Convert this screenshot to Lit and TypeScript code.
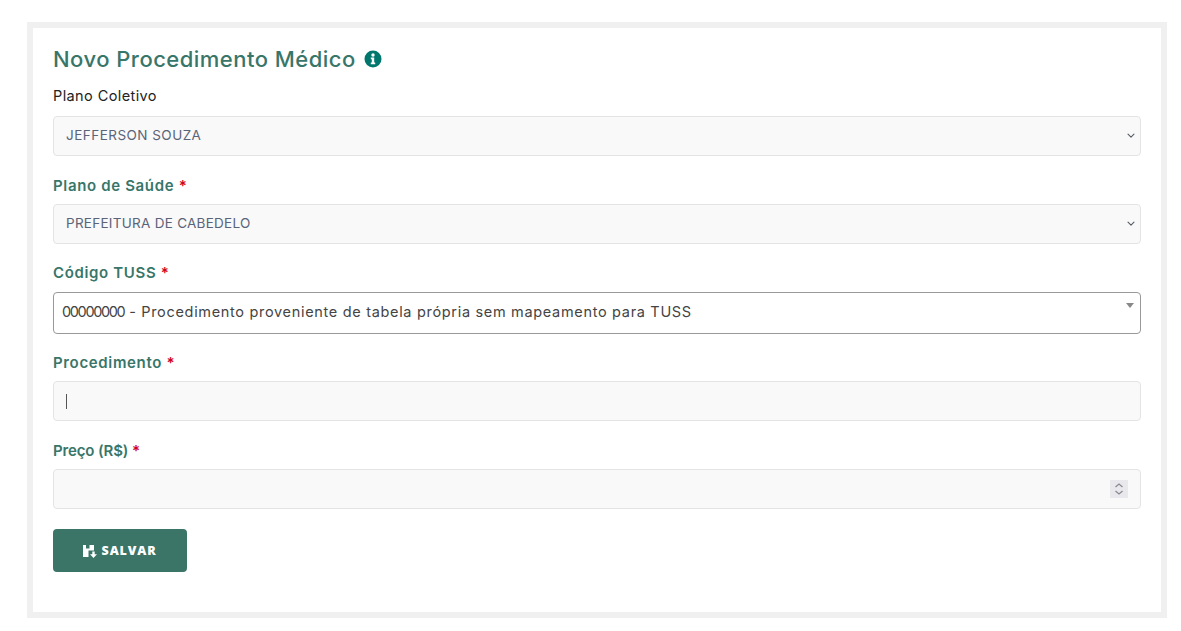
import { LitElement, html, css } from "lit";
import { customElement } from "lit/decorators.js";

const chevron = html`<svg class="chev" viewBox="0 0 8 6" width="8" height="6"><path fill="none" stroke="#555b63" stroke-width="1.1" stroke-linecap="round" stroke-linejoin="round" d="M1 1.2l3 3 3-3"/></svg>`;

@customElement("app-root")
export class AppRoot extends LitElement {
  static styles = css`
    :host { display: block; width: 1181px; height: 631px; background: #fff; box-sizing: border-box; padding: 22px 14px 13px 27px; font-family: "Inter", sans-serif; }
    .card { box-sizing: border-box; height: 596px; width: 1140px; border: 6px solid #f0f0f0; background: #fff; padding: 17px 20px 0 20px; }
    h1 { margin: 0; display: flex; align-items: center; gap: 8px; font-size: 22px; line-height: 28px; font-weight: 500; color: #39766a; letter-spacing: .47px; }
    .lbl { font-size: 14.5px; line-height: 20px; color: #222; margin: 13px 0 10px; letter-spacing: .4px; }
    .lbl.g { font-size: 15px; color: #39766a; font-weight: 600; margin: 0 0 8px; letter-spacing: .65px; }
    .lbl.t { margin-bottom: 9px; }
    .lbl.pr { letter-spacing: -.15px; }
    .req { color: #d0021b; }
    .field { box-sizing: border-box; height: 40px; border: 1px solid #e4e4e4; border-radius: 4px; background: #f9f9f9; display: flex; align-items: center; padding: 0 12px; font-size: 13.5px; color: #5a6478; margin-bottom: 20px; justify-content: space-between; }
    .f2 { margin-bottom: 19px; }
    .txt { padding-bottom: 2px; letter-spacing: .47px; }
    .txt.p { letter-spacing: .27px; }
    .tuss { box-sizing: border-box; height: 42px; border: 1px solid #999; border-radius: 4px; background: #fff; padding: 0 8px; font-size: 14.5px; line-height: 37px; letter-spacing: .68px; color: #444; margin-bottom: 19px; position: relative; white-space: pre; }
    .zeros { letter-spacing: -1.35px; }
    .tuss i { position: absolute; right: 6px; top: 10px; border: 4px solid transparent; border-top: 5px solid #888; border-bottom: 0; }
    .caret { width: 1px; height: 15px; background: #555; }
    .spin { width: 18px; height: 18px; background: #e9e9ed; display: flex; align-items: center; justify-content: center; margin-right: 0; }
    .chev { margin-right: -7px; }
    button { width: 134px; height: 43px; border: 0; border-radius: 4px; background: #3b7568; color: #fff; font: 800 12.5px "Open Sans", sans-serif; letter-spacing: .85px; display: flex; align-items: center; justify-content: center; gap: 5px; padding: 0 1px 0 0; }
  `;
  render() {
    return html`<div class="card">
      <h1>Novo Procedimento Médico
        <svg viewBox="0 0 18 18" width="18" height="18"><circle cx="9" cy="9" r="8.5" fill="#00776d"/><circle cx="9" cy="5" r="1.7" fill="#fff"/><path fill="#fff" d="M6.8 7.6h3.4v5h1v1.6H6.8v-1.6h1v-3.4h-1z"/></svg>
      </h1>
      <div class="lbl">Plano Coletivo</div>
      <div class="field"><span class="txt">JEFFERSON SOUZA</span> ${chevron}</div>
      <div class="lbl g">Plano de Saúde <span class="req">*</span></div>
      <div class="field f2"><span class="txt p">PREFEITURA DE CABEDELO</span> ${chevron}</div>
      <div class="lbl g t">Código TUSS <span class="req">*</span></div>
      <div class="tuss"><span class="zeros">00000000</span> - Procedimento proveniente de tabela própria sem mapeamento para TUSS<i></i></div>
      <div class="lbl g">Procedimento <span class="req">*</span></div>
      <div class="field"><span class="caret"></span></div>
      <div class="lbl g pr">Preço (R$) <span class="req">*</span></div>
      <div class="field"><span></span><span class="spin"><svg viewBox="0 0 10 14" width="10" height="14"><path fill="none" stroke="#8a8a94" stroke-width="1.3" d="M1.5 5l3.5-3 3.5 3M1.5 9l3.5 3 3.5-3"/></svg></span></div>
      <button><svg viewBox="0 0 14 14" width="14" height="14"><path fill="#fff" fill-rule="evenodd" d="M0 1h3v3.5h3.5V1H11v5.5H5.5V13H0z"/><path fill="#fff" d="M9.3 7.5h2.4v2.8H14L10.5 14 7 10.3h2.3z"/></svg>SALVAR</button>
    </div>`;
  }
}
